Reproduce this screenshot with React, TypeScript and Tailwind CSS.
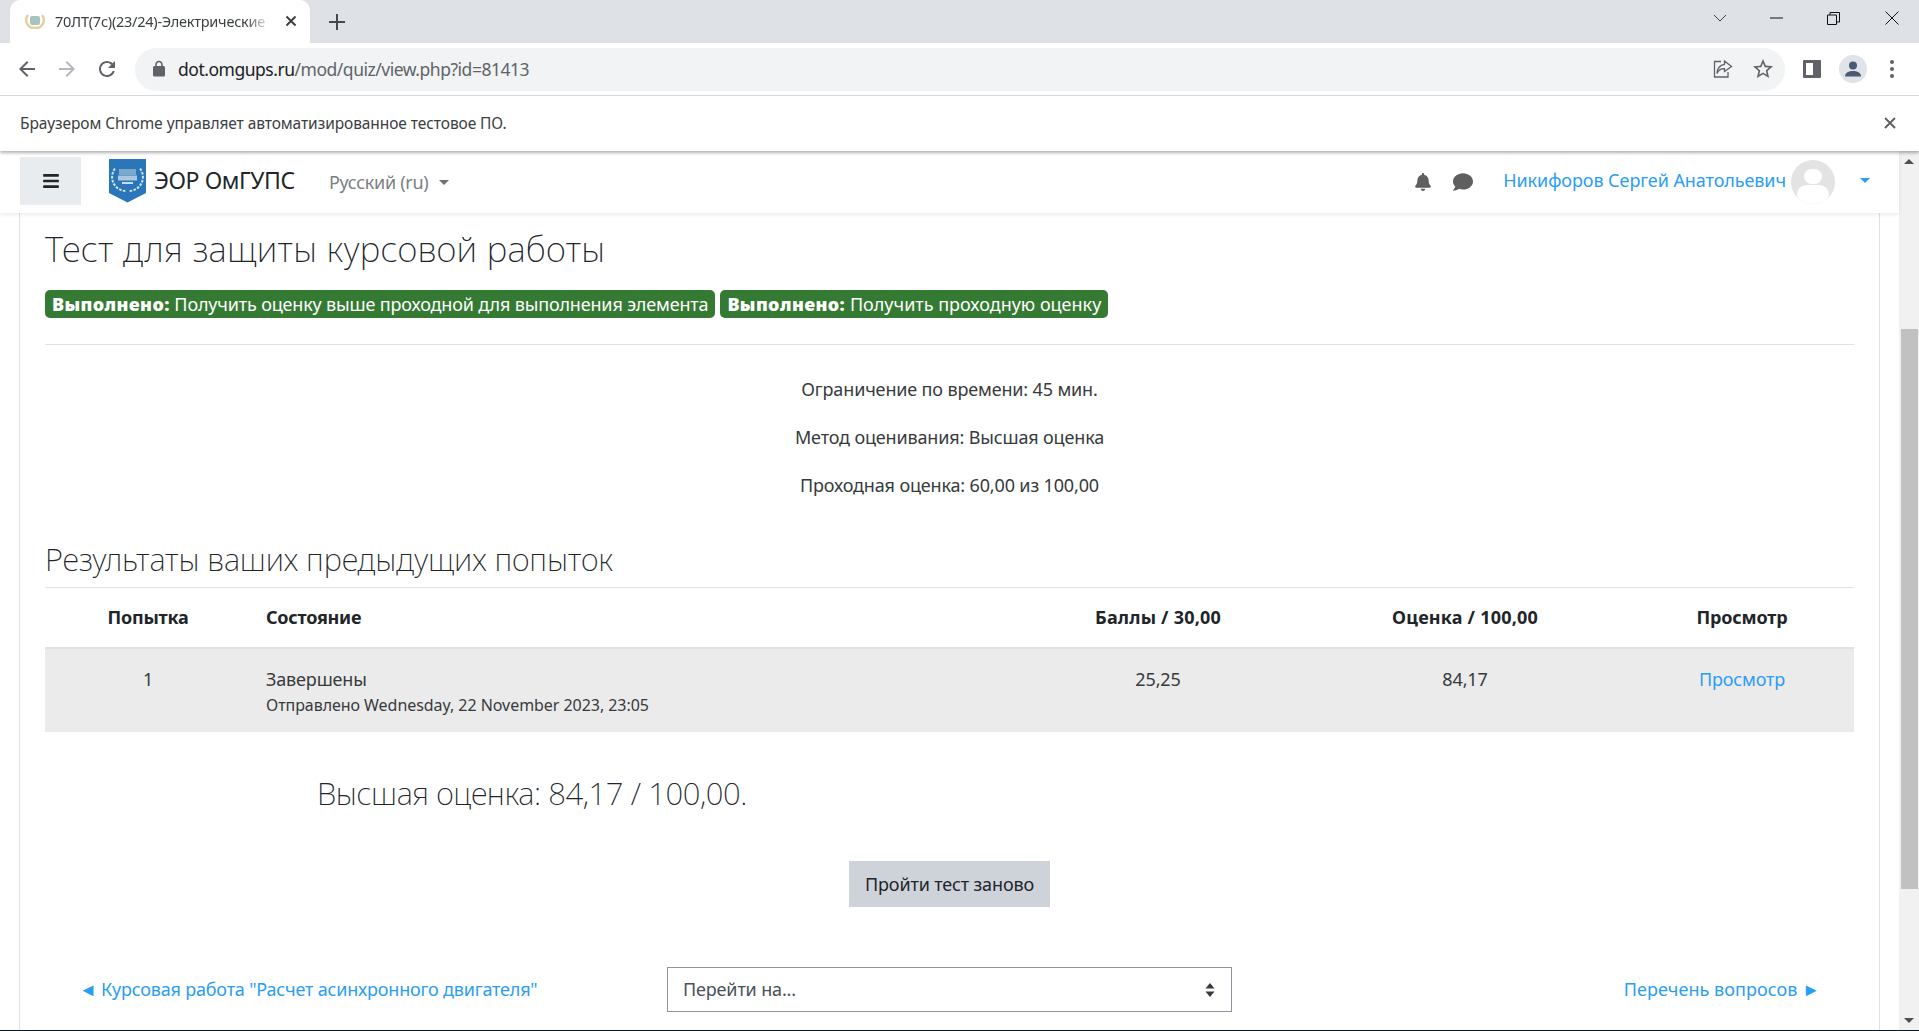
import { FaBars, FaBell, FaComment } from "react-icons/fa";

const Mat = ({ d, className, color = "#5f6368" }: { d: string; className?: string; color?: string }) => (
  <svg viewBox="0 0 24 24" className={className} fill={color}><path d={d} /></svg>
);

const Wreath = ({ size, cx, cy }: { size: number; cx: number; cy: number }) => (
  <g fill="none" stroke="#d5e4f0" strokeWidth={size * 0.14}>
    <path d={`M${cx - size * 0.9} ${cy - size * 0.6} A${size} ${size} 0 0 0 ${cx - size * 0.15} ${cy + size}`} strokeDasharray={`${size * 0.18} ${size * 0.1}`} />
    <path d={`M${cx + size * 0.9} ${cy - size * 0.6} A${size} ${size} 0 0 1 ${cx + size * 0.15} ${cy + size}`} strokeDasharray={`${size * 0.18} ${size * 0.1}`} />
  </g>
);

const Logo = () => (
  <svg viewBox="0 0 39 44" className="w-[39px] h-[44px] shrink-0">
    <path d="M1 0H38V34L19.5 43.5 1 34Z" fill="#2a76b8" />
    <Wreath size={14} cx={19.5} cy={18} />
    <rect x="11" y="10" width="17" height="6" fill="#7ba8cf" />
    <rect x="10" y="16.5" width="19" height="5" fill="#a9c6de" />
    <rect x="14" y="23" width="11" height="2" fill="#c9dcea" />
  </svg>
);

const Favicon = () => (
  <svg viewBox="0 0 20 16" className="w-[20px] h-[16px] shrink-0">
    <path d="M3 2A8 8 0 0 0 10 15A8 8 0 0 0 17 2" fill="none" stroke="#e3cfa0" strokeWidth="2.4" />
    <rect x="5" y="3" width="10" height="9" rx="2" fill="#a9c3bd" />
  </svg>
);

const cols = "grid grid-cols-[206px_765px_284px_330px_224px]";

export default function App() {
  return (
    <div className="w-[1919px] h-[1031px] overflow-hidden flex flex-col bg-white text-[#373a3c] font-['Noto_Sans','Open_Sans',sans-serif]">
      {/* tab strip */}
      <div className="h-[43px] shrink-0 bg-[#dee1e6] flex items-end pl-[10px]">
        <div className="w-[300px] h-[43px] bg-white rounded-t-[10px] flex items-center pl-[15px] pr-[12px] pb-[2px]">
          <Favicon />
          <span className="ml-[10px] w-[216px] h-[22px] leading-[22px] overflow-hidden whitespace-nowrap text-[14.5px] text-[#3c4043] tracking-[-0.25px] [mask-image:linear-gradient(to_right,black_88%,transparent)]">70ЛТ(7с)(23/24)-Электрические</span>
          <svg viewBox="0 0 12 12" className="w-[12px] h-[12px] ml-[14px]"><path d="M1.5 1.5L10.5 10.5M10.5 1.5L1.5 10.5" stroke="#3c4043" strokeWidth="2" /></svg>
        </div>
        <div className="h-[43px] flex items-center ml-[19px]">
          <svg viewBox="0 0 16 16" className="w-[16px] h-[16px]"><path d="M8 0V16M0 8H16" stroke="#45484d" strokeWidth="2" /></svg>
        </div>
        <div className="flex-1" />
        <div className="h-[36px] flex items-center pr-[20px] self-start">
          <svg viewBox="0 0 14 8" className="w-[14px] h-[8px] mr-[43px]"><path d="M1 1L7 7L13 1" fill="none" stroke="#3c4043" strokeWidth="1" /></svg>
          <svg viewBox="0 0 13 2" className="w-[13px] h-[2px] mr-[44px]"><path d="M0 1H13" stroke="#111" strokeWidth="1" /></svg>
          <svg viewBox="0 0 13 13" className="w-[13px] h-[13px] mr-[45px]"><path d="M.5 3H9.5V12.5H.5ZM3 3V.5H12.5V10H9.5" fill="none" stroke="#111" strokeWidth="1" /></svg>
          <svg viewBox="0 0 14 14" className="w-[14px] h-[14px]"><path d="M.5.5L13.5 13.5M13.5.5L.5 13.5" stroke="#111" strokeWidth="1" /></svg>
        </div>
      </div>
      {/* toolbar */}
      <div className="h-[53px] shrink-0 bg-white border-b border-[#dadce0] flex items-center pl-[15px]">
        <Mat className="w-[24px] h-[24px]" d="M20 11H7.83l5.59-5.59L12 4l-8 8 8 8 1.41-1.41L7.83 13H20v-2z" />
        <Mat className="w-[24px] h-[24px] ml-[16px]" color="#b4b7bb" d="M12 4l-1.41 1.41L16.17 11H4v2h12.17l-5.58 5.59L12 20l8-8z" />
        <Mat className="w-[24px] h-[24px] ml-[16px]" d="M17.65 6.35C16.2 4.9 14.21 4 12 4c-4.42 0-7.99 3.58-7.99 8s3.57 8 7.99 8c3.73 0 6.84-2.55 7.73-6h-2.08c-.82 2.33-3.04 4-5.65 4-3.31 0-6-2.69-6-6s2.69-6 6-6c1.66 0 3.14.69 4.22 1.78L13 11h7V4l-2.35 2.35z" />
        <div className="ml-[16px] w-[1650px] h-[43px] rounded-full bg-[#f1f3f4] flex items-center pl-[15px] pr-[10px]">
          <Mat className="w-[18px] h-[18px]" d="M18 8h-1V6c0-2.76-2.24-5-5-5S7 3.24 7 6v2H6c-1.1 0-2 .9-2 2v10c0 1.1.9 2 2 2h12c1.1 0 2-.9 2-2V10c0-1.1-.9-2-2-2zm-8.9-2c0-1.6 1.3-2.9 2.9-2.9s2.9 1.3 2.9 2.9v2H9.1V6z" />
          <span className="ml-[10px] text-[17.5px] tracking-[-0.48px] text-[#202124] whitespace-nowrap">dot.omgups.ru<span className="text-[#5f6368]">/mod/quiz/view.php?id=81413</span></span>
          <div className="flex-1" />
          <svg viewBox="0 0 20 20" className="w-[20px] h-[20px]" fill="none" stroke="#5f6368" strokeWidth="1.3"><path d="M8 2.5H1.5V18H15V13" /><path d="M11.5 2L18.5 7.5L11.5 12.5V9.6C8 9.4 5.5 11 4 14.5C4.2 9.5 7 6 11.5 5.3Z" /></svg>
          <Mat className="w-[24px] h-[24px] ml-[18px]" d="M22 9.24l-7.19-.62L12 2 9.19 8.63 2 9.24l5.46 4.73L5.82 21 12 17.27 18.18 21l-1.63-7.03L22 9.24zM12 15.4l-3.76 2.27 1-4.28-3.32-2.88 4.38-.38L12 6.1l1.71 4.04 4.38.38-3.32 2.88 1 4.28L12 15.4z" />
        </div>
        <div className="ml-[18px] w-[18px] h-[18px] border-[3px] border-[#5f6368] border-r-[8px] rounded-[1px]" />
        <div className="ml-[18px] w-[28px] h-[28px] rounded-full bg-[#e0e3e8] flex items-center justify-center">
          <svg viewBox="0 0 16 16" className="w-[16px] h-[16px]" fill="#4a5a72"><circle cx="8" cy="4.5" r="4" /><path d="M0 15.5C0 11.5 4 10 8 10s8 1.5 8 5.5Z" /></svg>
        </div>
        <div className="ml-[23px] flex flex-col gap-[3px]">
          <div className="w-[4px] h-[4px] rounded-full bg-[#5f6368]" />
          <div className="w-[4px] h-[4px] rounded-full bg-[#5f6368]" />
          <div className="w-[4px] h-[4px] rounded-full bg-[#5f6368]" />
        </div>
      </div>
      {/* infobar */}
      <div className="h-[55px] shrink-0 bg-white flex items-center pl-[20px] pr-[23px] justify-between shadow-[0_2px_3px_rgba(0,0,0,0.3)] relative z-20">
        <span className="text-[15.5px] tracking-[-0.08px] text-[#3c4043] mt-[1px]">Браузером Chrome управляет автоматизированное тестовое ПО.</span>
        <svg viewBox="0 0 12 12" className="w-[12px] h-[12px] mb-[2px]"><path d="M1 1L11 11M11 1L1 11" stroke="#5f6368" strokeWidth="2" /></svg>
      </div>
      {/* viewport */}
      <div className="flex-1 min-h-0 flex">
        <div className="w-[1899px] flex flex-col">
          <div className="h-[62px] shrink-0 bg-white flex items-center pl-[20px] pr-[29px] shadow-[0_2px_4px_rgba(0,0,0,0.08)] relative z-10">
            <div className="w-[61px] h-[48px] mb-[2px] bg-[#e9ecef] flex items-center justify-center">
              <FaBars className="text-[#212529] text-[18px]" />
            </div>
            <div className="ml-[27px] mb-[2px]"><Logo /></div>
            <span className="ml-[7px] mb-[3px] text-[23px] tracking-[-0.4px] text-[#212529]">ЭОР ОмГУПС</span>
            <span className="ml-[34px] text-[18px] tracking-[-0.3px] text-[#7b7f83]">Русский (ru)</span>
            <div className="ml-[11px] w-0 h-0 border-x-[5px] border-x-transparent border-t-[5px] border-t-[#6c7075]" />
            <div className="flex-1" />
            <FaBell className="text-[#5f5f5f] text-[18px]" />
            <FaComment className="ml-[21px] text-[#5f5f5f] text-[20px]" />
            <span className="ml-[30px] mb-[3px] text-[18px] tracking-[-0.08px] text-[#2a9df4] whitespace-nowrap">Никифоров Сергей Анатольевич</span>
            <div className="ml-[5px] w-[44px] h-[44px] rounded-full bg-[#e3e3e3] overflow-hidden flex flex-col items-center">
              <div className="mt-[9px] w-[18px] h-[18px] rounded-full bg-white" />
              <div className="mt-[1px] w-[32px] h-[24px] rounded-full bg-white" />
            </div>
            <div className="ml-[25px] mb-[3px] w-0 h-0 border-x-[5px] border-x-transparent border-t-[5px] border-t-[#2a9df4]" />
          </div>
          <div className="flex-1 min-h-0 mx-[19px] border-x border-[#dee2e6] px-[25px] text-[18px] tracking-[-0.15px]">
            <h1 className="mt-[12px] h-[48px] leading-[48px] text-[35px] font-extralight tracking-[0.28px] text-[#212529] whitespace-nowrap">Тест для защиты курсовой работы</h1>
            <div className="mt-[17px] flex gap-[5px] text-white text-[18px]">
              <span className="h-[28px] leading-[28px] px-[7px] bg-[#357a32] rounded-[5px] whitespace-nowrap tracking-[-0.16px]"><b className="font-black tracking-[0.4px]">Выполнено:</b> Получить оценку выше проходной для выполнения элемента</span>
              <span className="h-[28px] leading-[28px] px-[7px] bg-[#357a32] rounded-[5px] whitespace-nowrap tracking-[0px]"><b className="font-black tracking-[0.4px]">Выполнено:</b> Получить проходную оценку</span>
            </div>
            <div className="mt-[26px] h-px bg-[#dee2e6]" />
            <div className="mt-[20px] text-center leading-[48px]">
              <p>Ограничение по времени: 45 мин.</p>
              <p>Метод оценивания: Высшая оценка</p>
              <p>Проходная оценка: 60,00 из 100,00</p>
            </div>
            <h3 className="mt-[30px] h-[40px] leading-[40px] text-[31px] font-extralight tracking-[-0.11px] text-[#212529] whitespace-nowrap">Результаты ваших предыдущих попыток</h3>
            <div className="mt-[8px] h-px bg-[#dee2e6]" />
            <div className={`${cols} h-[59px] items-center font-bold text-center text-[#212529]`}>
              <span className="tracking-[-0.25px]">Попытка</span>
              <span className="tracking-[-0.25px] text-left pl-[15px]">Состояние</span>
              <span className="tracking-[0.2px]">Баллы / 30,00</span>
              <span className="tracking-[0.2px]">Оценка / 100,00</span>
              <span>Просмотр</span>
            </div>
            <div className="h-[2px] bg-[#dee2e6]" />
            <div className={`${cols} h-[83px] bg-[#ebebeb] text-center pt-[17px] leading-[26px]`}>
              <span>1</span>
              <div className="text-left pl-[15px]">
                <div>Завершены</div>
                <div className="text-[16px] tracking-[-0.05px]">Отправлено Wednesday, 22 November 2023, 23:05</div>
              </div>
              <span>25,25</span>
              <span>84,17</span>
              <span className="text-[#2a9df4]">Просмотр</span>
            </div>
            <div className="mt-[41px] h-[40px] leading-[40px] pl-[272px] text-[31px] font-extralight tracking-[-0.41px] text-[#212529] whitespace-nowrap">Высшая оценка: 84,17 / 100,00.</div>
            <div className="mt-[48px] flex justify-center">
              <div className="w-[201px] h-[46px] bg-[#ced3da] flex items-center justify-center text-[#212529]">Пройти тест заново</div>
            </div>
            <div className="mt-[60px] h-[45px] flex items-center justify-between px-[34px]">
              <span className="text-[#2a9df4] w-[586px] whitespace-nowrap tracking-[-0.19px]">◄ Курсовая работа "Расчет асинхронного двигателя"</span>
              <div className="w-[565px] h-[45px] border border-[#8f959e] flex items-center justify-between pl-[15px] pr-[16px] text-[#495057]">
                <span>Перейти на...</span>
                <svg viewBox="0 0 10 16" className="w-[10px] h-[16px]" fill="#343a40"><path d="M5 1L9.5 6.5H.5ZM5 15L.5 9.5H9.5Z" /></svg>
              </div>
              <span className="text-[#2a9df4] w-[586px] text-right whitespace-nowrap tracking-[0.05px]">Перечень вопросов ►</span>
            </div>
          </div>
        </div>
        <div className="w-[20px] flex flex-col items-center bg-[#f1f1f1]">
          <div className="h-[20px] shrink-0 flex items-center justify-center">
            <div className="w-0 h-0 border-x-[5px] border-x-transparent border-b-[5px] border-b-[#505050]" />
          </div>
          <div className="h-[158px] shrink-0" />
          <div className="h-[560px] w-[17px] shrink-0 bg-[#c1c1c1]" />
          <div className="flex-1" />
          <div className="h-[20px] shrink-0 flex items-center justify-center">
            <div className="w-0 h-0 border-x-[5px] border-x-transparent border-t-[5px] border-t-[#505050]" />
          </div>
        </div>
      </div>
      <div className="h-px shrink-0 bg-[#0c1c22]" />
    </div>
  );
}
